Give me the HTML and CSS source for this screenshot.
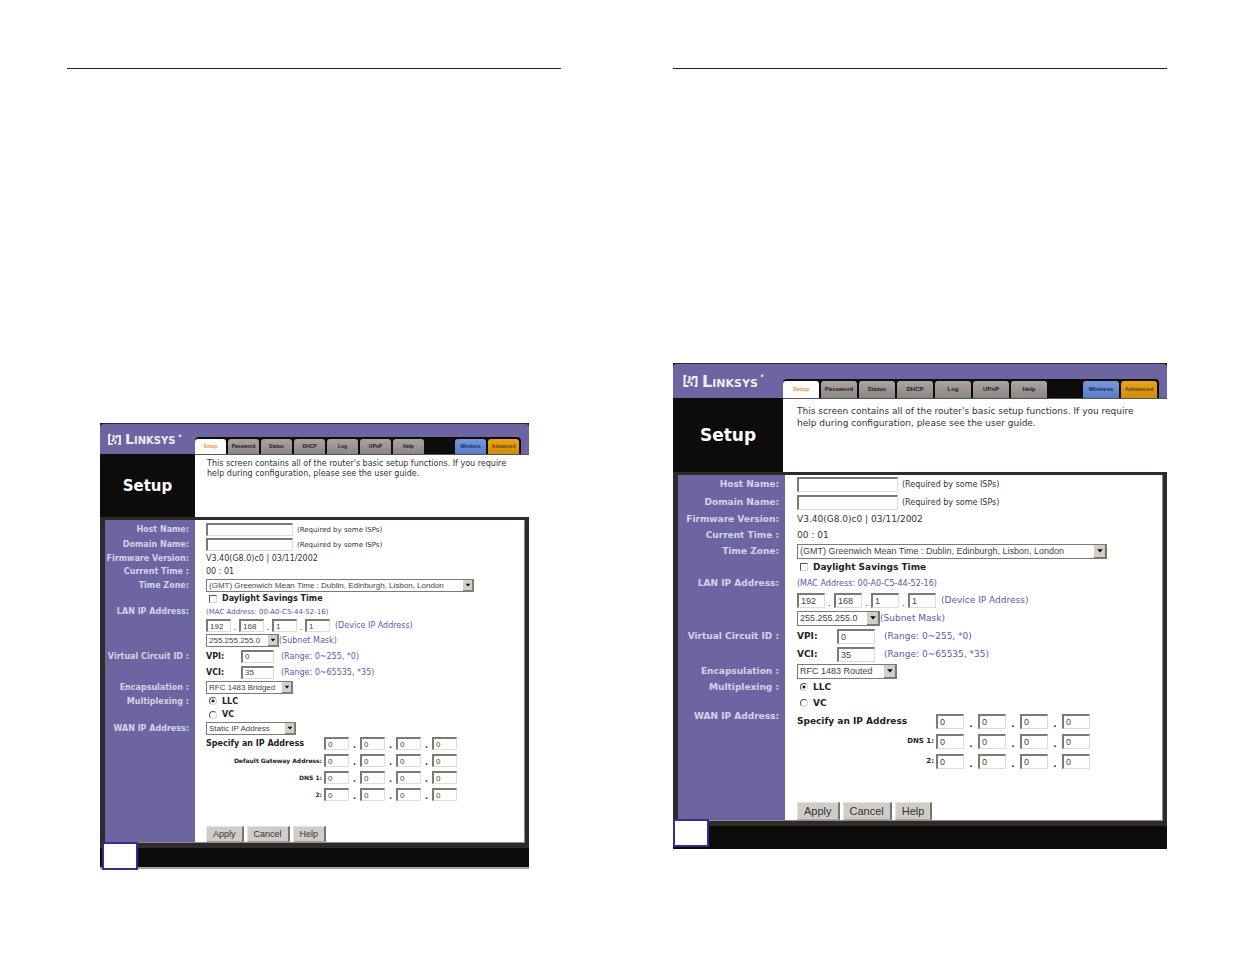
FILE: index.html
```
<!DOCTYPE html>
<html lang="en">
	<head>
		<meta charset="UTF-8" />
		<meta name="viewport" content="width=device-width, initial-scale=1.0" />
		<title>Linksys Setup</title>
		<link rel="stylesheet" href="styles.css">
	</head>
	<body>
		<main class="spread">
			<section class="page">
				<div class="router small">
					<header class="topbar">
						<div class="brand">
							<svg class="logo" viewBox="0 0 14 12" aria-hidden="true">
								<path d="M3 1H1v10h4M6 1v5L4 8M8 11V7M9 2h4v9h-2M9 2v3" />
							</svg>
							<span class="wordmark">Linksys</span><span class="mark">&bull;</span>
						</div>
						<nav class="tabs">
							<a href="#" class="tab active">Setup</a>
							<a href="#" class="tab">Password</a>
							<a href="#" class="tab">Status</a>
							<a href="#" class="tab">DHCP</a>
							<a href="#" class="tab">Log</a>
							<a href="#" class="tab">UPnP</a>
							<a href="#" class="tab">Help</a>
							<a href="#" class="tab wireless">Wireless</a>
							<a href="#" class="tab advanced">Advanced</a>
						</nav>
					</header>
					<div class="intro">
						<h1>Setup</h1>
						<p>This screen contains all of the router's basic setup functions. If you require<br>help during configuration, please see the user guide.</p>
					</div>
					<form class="settings">
						<div class="row field">
							<label class="name" for="a-host">Host Name:</label>
							<input type="text" class="wide" id="a-host" />
							<span class="note">(Required by some ISPs)</span>
						</div>
						<div class="row field">
							<label class="name" for="a-domain">Domain Name:</label>
							<input type="text" class="wide" id="a-domain" />
							<span class="note">(Required by some ISPs)</span>
						</div>
						<div class="row">
							<span class="name">Firmware Version:</span>
							<span>V3.40(G8.0)c0 | 03/11/2002</span>
						</div>
						<div class="row">
							<span class="name">Current Time :</span>
							<span>00 : 01</span>
						</div>
						<div class="row line">
							<label class="name" for="a-zone">Time Zone:</label>
							<select id="a-zone" class="zone">
								<option>(GMT) Greenwich Mean Time : Dublin, Edinburgh, Lisbon, London</option>
							</select>
						</div>
						<div class="row">
							<span class="name"></span>
							<input type="checkbox" id="a-dst" />
							<label class="strong" for="a-dst">Daylight Savings Time</label>
						</div>
						<div class="row">
							<span class="name">LAN IP Address:</span>
							<span class="mac">(MAC Address: 00-A0-C5-44-52-16)</span>
						</div>
						<div class="row field">
							<span class="name"></span>
							<span class="lan">
								<input type="text" value="192" aria-label="LAN IP 1" /><i>.</i>
								<input type="text" value="168" aria-label="LAN IP 2" /><i>.</i>
								<input type="text" value="1" aria-label="LAN IP 3" /><i>.</i>
								<input type="text" value="1" aria-label="LAN IP 4" />
							</span>
							<span class="hint">(Device IP Address)</span>
						</div>
						<div class="row field">
							<span class="name"></span>
							<select id="a-mask" class="mask" aria-label="Subnet Mask">
								<option>255.255.255.0</option>
							</select>
							<span class="blue">(Subnet Mask)</span>
						</div>
						<div class="row circuit">
							<span class="name">Virtual Circuit ID :</span>
							<label class="strong key" for="a-vpi">VPI:</label>
							<input type="text" class="num" id="a-vpi" value="0" />
							<span class="range">(Range: 0~255, *0)</span>
						</div>
						<div class="row circuit">
							<span class="name"></span>
							<label class="strong key" for="a-vci">VCI:</label>
							<input type="text" class="num" id="a-vci" value="35" />
							<span class="range">(Range: 0~65535, *35)</span>
						</div>
						<div class="row line">
							<label class="name" for="a-encap">Encapsulation :</label>
							<select id="a-encap" class="encap">
								<option>RFC 1483 Bridged</option>
							</select>
						</div>
						<div class="row line">
							<span class="name">Multiplexing :</span>
							<input type="radio" name="a-mux" id="a-llc" checked />
							<label class="strong" for="a-llc">LLC</label>
						</div>
						<div class="row">
							<span class="name"></span>
							<input type="radio" name="a-mux" id="a-vc" />
							<label class="strong" for="a-vc">VC</label>
						</div>
						<div class="row line">
							<label class="name" for="a-wan">WAN IP Address:</label>
							<select id="a-wan" class="wan">
								<option>Static IP Address</option>
							</select>
						</div>
						<div class="row address">
							<span class="name"></span>
							<span class="strong title">Specify an IP Address</span>
							<span class="octets">
								<input type="text" value="0" aria-label="IP 1" /><b>.</b>
								<input type="text" value="0" aria-label="IP 2" /><b>.</b>
								<input type="text" value="0" aria-label="IP 3" /><b>.</b>
								<input type="text" value="0" aria-label="IP 4" />
							</span>
						</div>
						<div class="row address">
							<span class="name"></span>
							<span class="title sub">Default Gateway Address:</span>
							<span class="octets">
								<input type="text" value="0" aria-label="Gateway 1" /><b>.</b>
								<input type="text" value="0" aria-label="Gateway 2" /><b>.</b>
								<input type="text" value="0" aria-label="Gateway 3" /><b>.</b>
								<input type="text" value="0" aria-label="Gateway 4" />
							</span>
						</div>
						<div class="row address">
							<span class="name"></span>
							<span class="title sub">DNS 1:</span>
							<span class="octets">
								<input type="text" value="0" aria-label="DNS 1, 1" /><b>.</b>
								<input type="text" value="0" aria-label="DNS 1, 2" /><b>.</b>
								<input type="text" value="0" aria-label="DNS 1, 3" /><b>.</b>
								<input type="text" value="0" aria-label="DNS 1, 4" />
							</span>
						</div>
						<div class="row address">
							<span class="name"></span>
							<span class="title sub">2:</span>
							<span class="octets">
								<input type="text" value="0" aria-label="DNS 2, 1" /><b>.</b>
								<input type="text" value="0" aria-label="DNS 2, 2" /><b>.</b>
								<input type="text" value="0" aria-label="DNS 2, 3" /><b>.</b>
								<input type="text" value="0" aria-label="DNS 2, 4" />
							</span>
						</div>
						<div class="actions">
							<button type="submit">Apply</button>
							<button type="reset">Cancel</button>
							<button type="button">Help</button>
						</div>
					</form>
					<footer class="bottom"></footer>
					<div class="folio"></div>
				</div>
			</section>

			<section class="page">
				<div class="router">
					<header class="topbar">
						<div class="brand">
							<svg class="logo" viewBox="0 0 14 12" aria-hidden="true">
								<path d="M3 1H1v10h4M6 1v5L4 8M8 11V7M9 2h4v9h-2M9 2v3" />
							</svg>
							<span class="wordmark">Linksys</span><span class="mark">&bull;</span>
						</div>
						<nav class="tabs">
							<a href="#" class="tab active">Setup</a>
							<a href="#" class="tab">Password</a>
							<a href="#" class="tab">Status</a>
							<a href="#" class="tab">DHCP</a>
							<a href="#" class="tab">Log</a>
							<a href="#" class="tab">UPnP</a>
							<a href="#" class="tab">Help</a>
							<a href="#" class="tab wireless">Wireless</a>
							<a href="#" class="tab advanced">Advanced</a>
						</nav>
					</header>
					<div class="intro">
						<h1>Setup</h1>
						<p>This screen contains all of the router's basic setup functions. If you require<br>help during configuration, please see the user guide.</p>
					</div>
					<form class="settings">
						<div class="row field">
							<label class="name" for="b-host">Host Name:</label>
							<input type="text" class="wide" id="b-host" />
							<span class="note">(Required by some ISPs)</span>
						</div>
						<div class="row field">
							<label class="name" for="b-domain">Domain Name:</label>
							<input type="text" class="wide" id="b-domain" />
							<span class="note">(Required by some ISPs)</span>
						</div>
						<div class="row">
							<span class="name">Firmware Version:</span>
							<span>V3.40(G8.0)c0 | 03/11/2002</span>
						</div>
						<div class="row">
							<span class="name">Current Time :</span>
							<span>00 : 01</span>
						</div>
						<div class="row line">
							<label class="name" for="b-zone">Time Zone:</label>
							<select id="b-zone" class="zone">
								<option>(GMT) Greenwich Mean Time : Dublin, Edinburgh, Lisbon, London</option>
							</select>
						</div>
						<div class="row">
							<span class="name"></span>
							<input type="checkbox" id="b-dst" />
							<label class="strong" for="b-dst">Daylight Savings Time</label>
						</div>
						<div class="row">
							<span class="name">LAN IP Address:</span>
							<span class="mac">(MAC Address: 00-A0-C5-44-52-16)</span>
						</div>
						<div class="row field">
							<span class="name"></span>
							<span class="lan">
								<input type="text" value="192" aria-label="LAN IP 1" /><i>.</i>
								<input type="text" value="168" aria-label="LAN IP 2" /><i>.</i>
								<input type="text" value="1" aria-label="LAN IP 3" /><i>.</i>
								<input type="text" value="1" aria-label="LAN IP 4" />
							</span>
							<span class="hint">(Device IP Address)</span>
						</div>
						<div class="row field">
							<span class="name"></span>
							<select id="b-mask" class="mask" aria-label="Subnet Mask">
								<option>255.255.255.0</option>
							</select>
							<span class="blue">(Subnet Mask)</span>
						</div>
						<div class="row circuit">
							<span class="name">Virtual Circuit ID :</span>
							<label class="strong key" for="b-vpi">VPI:</label>
							<input type="text" class="num" id="b-vpi" value="0" />
							<span class="range">(Range: 0~255, *0)</span>
						</div>
						<div class="row circuit">
							<span class="name"></span>
							<label class="strong key" for="b-vci">VCI:</label>
							<input type="text" class="num" id="b-vci" value="35" />
							<span class="range">(Range: 0~65535, *35)</span>
						</div>
						<div class="row line">
							<label class="name" for="b-encap">Encapsulation :</label>
							<select id="b-encap" class="encap">
								<option>RFC 1483 Routed</option>
							</select>
						</div>
						<div class="row line">
							<span class="name">Multiplexing :</span>
							<input type="radio" name="b-mux" id="b-llc" checked />
							<label class="strong" for="b-llc">LLC</label>
						</div>
						<div class="row">
							<span class="name"></span>
							<input type="radio" name="b-mux" id="b-vc" />
							<label class="strong" for="b-vc">VC</label>
						</div>
						<div class="row address">
							<span class="name top">WAN IP Address:</span>
							<span class="strong title">Specify an IP Address</span>
							<span class="octets">
								<input type="text" value="0" aria-label="IP 1" /><b>.</b>
								<input type="text" value="0" aria-label="IP 2" /><b>.</b>
								<input type="text" value="0" aria-label="IP 3" /><b>.</b>
								<input type="text" value="0" aria-label="IP 4" />
							</span>
						</div>
						<div class="row address">
							<span class="name"></span>
							<span class="title sub">DNS 1:</span>
							<span class="octets">
								<input type="text" value="0" aria-label="DNS 1, 1" /><b>.</b>
								<input type="text" value="0" aria-label="DNS 1, 2" /><b>.</b>
								<input type="text" value="0" aria-label="DNS 1, 3" /><b>.</b>
								<input type="text" value="0" aria-label="DNS 1, 4" />
							</span>
						</div>
						<div class="row address">
							<span class="name"></span>
							<span class="title sub">2:</span>
							<span class="octets">
								<input type="text" value="0" aria-label="DNS 2, 1" /><b>.</b>
								<input type="text" value="0" aria-label="DNS 2, 2" /><b>.</b>
								<input type="text" value="0" aria-label="DNS 2, 3" /><b>.</b>
								<input type="text" value="0" aria-label="DNS 2, 4" />
							</span>
						</div>
						<div class="actions">
							<button type="submit">Apply</button>
							<button type="reset">Cancel</button>
							<button type="button">Help</button>
						</div>
					</form>
					<footer class="bottom"></footer>
					<div class="folio"></div>
				</div>
			</section>
		</main>
	</body>
</html>
```
FILE: styles.css
```
* {
	box-sizing: border-box;
}
body {
	margin: 0;
	background-color: white;
	font-family: "DejaVu Sans", Verdana, sans-serif;
}
.spread {
	display: grid;
	grid-template-columns: 1fr 1fr;
	gap: 112px;
	padding: 68px 68px 68px 67px;
}
.page {
	border-top: 1px solid #222;
	padding-top: 294px;
}

/* sizes shared by the parts of one router screen */
.router {
	--lead: 110px;
	--side: 107px;
	--indent: 12px;
	--bar: 35px;
	--tab: 36px;
	--tab-height: 17px;
	--intro: 74px;
	--text: 16px;
	--line: 16px;
	--field: 18px;
	--circuit: 18px;
	--address: 20px;
	--input: 15px;
	--font: 9px;
	--note-font: 8px;
	--sub-font: 7px;
	--tab-font: 6px;
	--octet: 28px;
	position: relative;
	background-color: #0d0c0b;
	font-size: var(--font);
	color: #333;
}
.router.small {
	--lead: 95px;
	--side: 90px;
	--indent: 11px;
	--bar: 31px;
	--tab: 31px;
	--tab-height: 15px;
	--intro: 63px;
	--text: 13px;
	--line: 14px;
	--field: 15px;
	--circuit: 16px;
	--address: 17px;
	--input: 13px;
	--font: 8px;
	--note-font: 7px;
	--sub-font: 6px;
	--tab-font: 5px;
	--octet: 25px;
	margin: 60px 32px 0 33px;
}

.topbar {
	display: flex;
	align-items: flex-end;
	height: var(--bar);
	padding-right: 8px;
	background-color: #6c65a2;
	border-top: 1px solid #2b2748;
	border-radius: 4px 4px 0 0;
}
.brand {
	display: flex;
	align-items: center;
	align-self: stretch;
	width: var(--lead);
	padding-left: 10px;
	color: #eeecf8;
}
.small .brand {
	padding-left: 8px;
}
.logo {
	width: 15px;
	height: 12px;
	margin-right: 4px;
	fill: none;
	stroke: #f4f2fc;
	stroke-width: 2;
}
.small .logo {
	width: 13px;
	height: 11px;
}
.wordmark {
	font-size: 16px;
	font-variant: small-caps;
	font-weight: bold;
}
.small .wordmark {
	font-size: 14px;
}
.mark {
	align-self: flex-start;
	padding: 8px 0 0 2px;
	font-size: 8px;
}
.tabs {
	display: flex;
	flex: 1;
	align-items: flex-end;
	gap: 2px;
	padding: 2px 2px 0 0;
	background-color: #0d0c0b;
	border-radius: 4px 4px 0 0;
}
.tab {
	width: var(--tab);
	height: var(--tab-height);
	line-height: var(--tab-height);
	border-radius: 3px 3px 0 0;
	background-image: linear-gradient(#aaa5a3, #8b8684);
	color: #1c1a1a;
	font-family: "Liberation Sans", Arial, sans-serif;
	font-size: var(--tab-font);
	font-weight: bold;
	text-align: center;
	text-decoration: none;
}
.tab.active {
	background-image: none;
	background-color: white;
	color: #ee8c32;
}
.tab.wireless {
	margin-left: auto;
	background-image: linear-gradient(#7898dc, #587cc4);
	color: #172a60;
}
.tab.advanced {
	background-image: linear-gradient(#e8a418, #cf8c0c);
	color: #6a3c00;
}

.intro {
	display: flex;
	height: var(--intro);
}
.intro h1 {
	display: flex;
	align-items: center;
	justify-content: center;
	width: var(--lead);
	margin: 0;
	color: white;
	font-size: 17px;
}
.small .intro h1 {
	font-size: 15px;
}
.intro p {
	flex: 1;
	margin: 0;
	padding: 6px 0 0 14px;
	background-color: white;
	line-height: 12px;
	white-space: nowrap;
	border-top: 1px solid #555;
}
.small .intro p {
	padding: 4px 0 0 12px;
	line-height: 10px;
}

.settings {
	border: 3px solid #2e2b2a;
	border-width: 3px 4px 5px 5px;
	background-image: linear-gradient(to right, #6c65a2 var(--side), white var(--side));
	box-shadow: inset -1px -1px 0 #8e8a88;
}
.small .settings {
	padding-top: 2px;
}
.row {
	display: flex;
	align-items: center;
	height: var(--text);
	white-space: nowrap;
}
.row.line {
	height: var(--line);
}
.row.field {
	height: var(--field);
}
.row.circuit {
	height: var(--circuit);
}
.row.address {
	height: var(--address);
}
.name {
	width: var(--side);
	margin-right: var(--indent);
	padding-right: 6px;
	color: #d6d2ec;
	font-weight: bold;
	text-align: right;
}
.name.top {
	align-self: flex-start;
}
.strong {
	font-weight: bold;
	color: #222;
}
.note {
	padding-left: 4px;
	font-size: var(--note-font);
}
.mac {
	font-size: var(--note-font);
	color: #5a54a4;
}
.blue,
.hint,
.range {
	color: #5f59ac;
}
.hint {
	padding-left: 5px;
}

input[type="text"],
select {
	height: var(--input);
	margin: 0;
	padding: 0 2px;
	background-color: white;
	border: 1px solid #dedbd8;
	border-top: 2px solid #7d7977;
	border-left: 2px solid #7d7977;
	border-radius: 0;
	color: #444;
	font-family: "Liberation Sans", Arial, sans-serif;
	font-size: var(--font);
}
input.wide {
	width: 101px;
}
.small input.wide {
	width: 87px;
}
select {
	appearance: none;
	border-width: 1px;
	border-color: #7d7977;
	background-image: url("data:image/svg+xml,%3Csvg xmlns='http://www.w3.org/2000/svg' viewBox='0 0 11 12'%3E%3Cpath fill='%23d2cec9' d='M0 0h11v12H0z'/%3E%3Cpath fill='none' stroke='%23777' d='M0 11.5h10.5V0'/%3E%3Cpath d='M3 4h5L5.5 7z'/%3E%3C/svg%3E");
	background-repeat: no-repeat;
	background-position: right center;
	background-size: auto 100%;
}
.zone {
	width: 310px;
}
.small .zone {
	width: 268px;
}
.mask {
	width: 83px;
}
.small .mask {
	width: 73px;
}
.encap {
	width: 100px;
}
.small .encap {
	width: 87px;
}
.wan {
	width: 90px;
}
.key {
	width: 40px;
}
.small .key {
	width: 35px;
}
.num {
	width: 38px;
}
.small .num {
	width: 33px;
}
.range {
	padding-left: 9px;
}
.small .range {
	padding-left: 7px;
}
input[type="checkbox"],
input[type="radio"] {
	appearance: none;
	width: 8px;
	height: 8px;
	margin: 0 5px 0 3px;
	border: 1px solid #d8d5d2;
	border-top-color: #555;
	border-left-color: #555;
	background-color: white;
}
input[type="radio"] {
	border-radius: 50%;
}
input[type="radio"]:checked {
	background-image: radial-gradient(#222 1px, transparent 2px);
}

.lan,
.octets {
	display: flex;
	align-items: flex-end;
}
.lan input,
.octets input {
	width: var(--octet);
}
.lan i {
	width: 9px;
	text-align: center;
	font-style: normal;
}
.small .lan i {
	width: 8px;
}
.octets b {
	width: 14px;
	text-align: center;
}
.small .octets b {
	width: 11px;
}
.title {
	width: 139px;
}
.small .title {
	width: 118px;
}
.title.sub {
	padding-right: 2px;
	color: #222;
	font-size: var(--sub-font);
	font-weight: bold;
	text-align: right;
}

.actions {
	display: flex;
	gap: 3px;
	padding: 31px 0 1px calc(var(--side) + var(--indent));
}
.small .actions {
	padding-top: 23px;
}
button {
	height: 18px;
	padding: 0 6px;
	border: 1px solid #e6e3df;
	border-right: 2px solid #77736f;
	border-bottom-color: #aaa6a2;
	background-color: #d0ccc7;
	color: #333;
	font-family: "Liberation Sans", Arial, sans-serif;
	font-size: 11px;
}
.small button {
	height: 16px;
	font-size: 9px;
}

.bottom {
	height: 23px;
}
.small .bottom {
	height: 21px;
	border-bottom: 2px solid #aaa4a4;
}
.folio {
	position: absolute;
	left: 0;
	bottom: 2px;
	width: 36px;
	height: 28px;
	border: 2px solid #2c3192;
	background-color: white;
}
.small .folio {
	left: 2px;
	bottom: -1px;
}
```
